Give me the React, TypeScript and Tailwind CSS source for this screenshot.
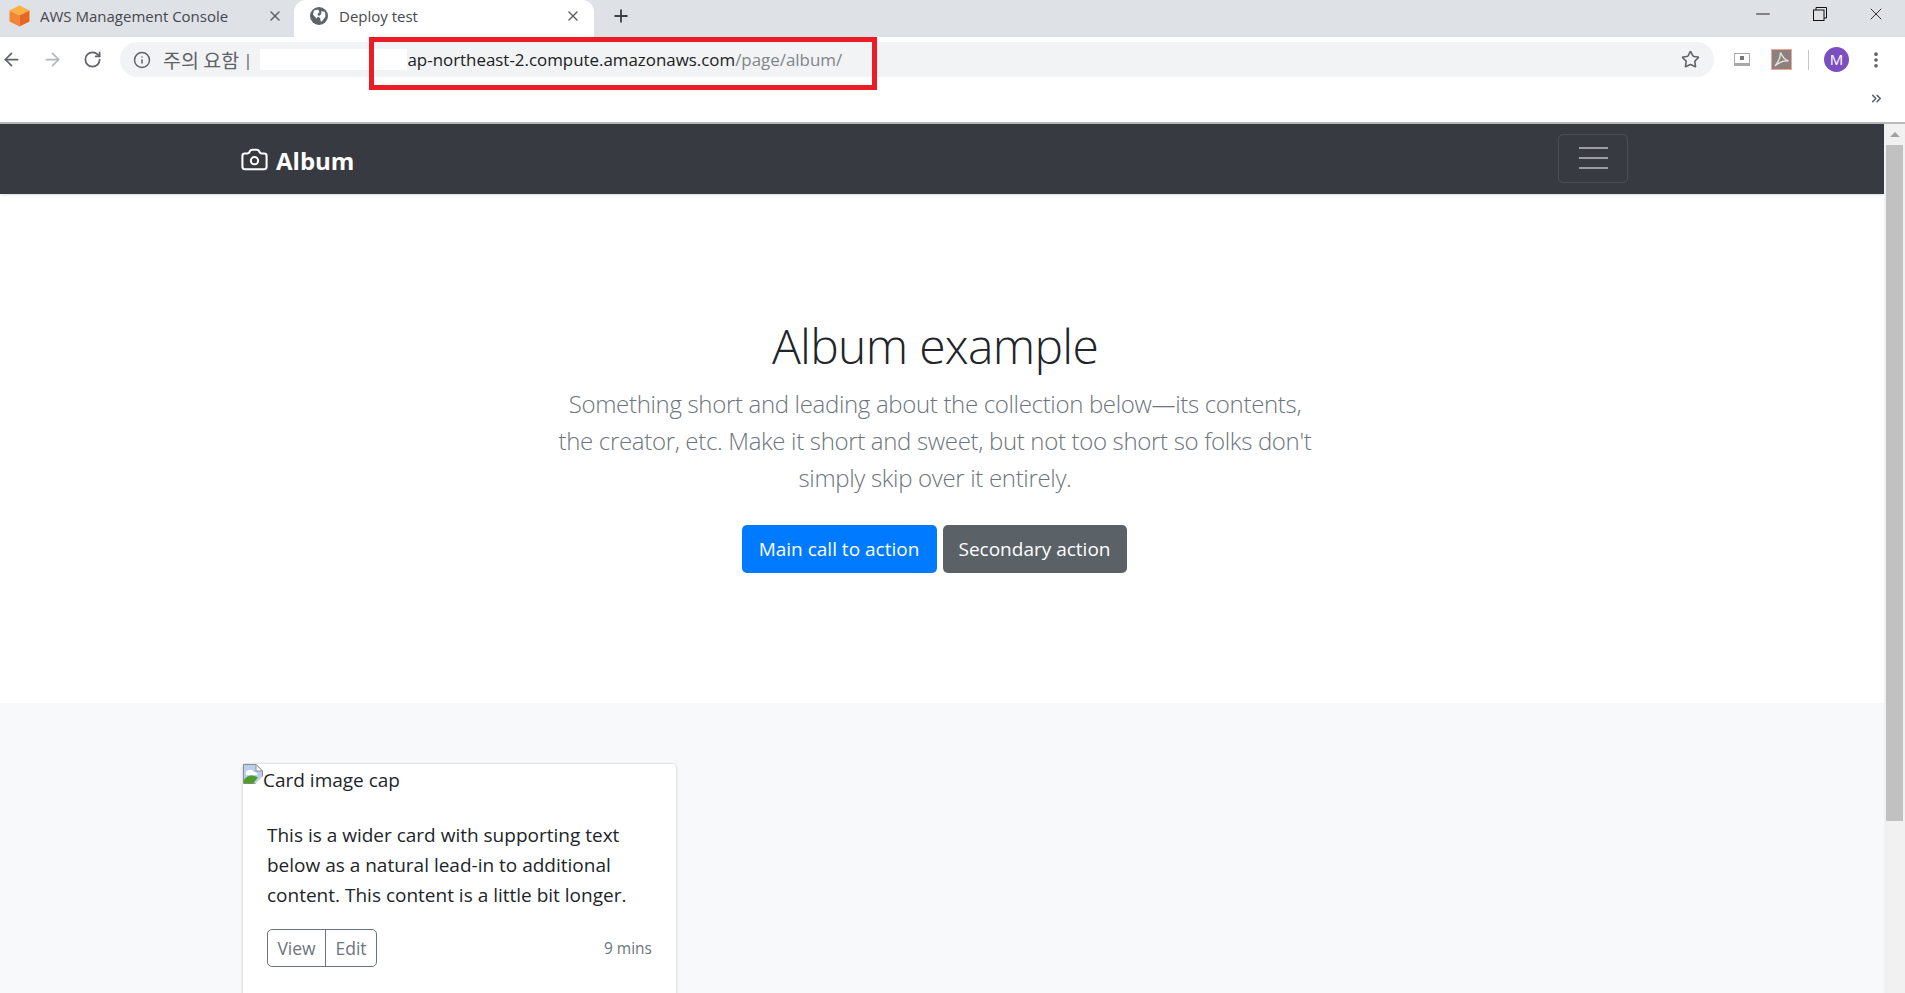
import { ArrowLeft, ArrowRight, RotateCw, Info, Star, X, Plus, Minus, Camera, MoreVertical, ChevronsRight } from 'lucide-react'

const sans = 'font-["Open_Sans",sans-serif]'

function AwsCube() {
  return (
    <svg width="21" height="22" viewBox="0 0 21 22" className="shrink-0">
      <path d="M10.5 0.5 20.5 5.5 10.5 10.5 0.5 5.5Z" fill="#fbb040" />
      <path d="M0.5 5.5 10.5 10.5V21.5L0.5 16.5Z" fill="#f58536" />
      <path d="M20.5 5.5 10.5 10.5V21.5L20.5 16.5Z" fill="#e9661f" />
    </svg>
  )
}

function Globe() {
  return (
    <svg width="18" height="18" viewBox="0 0 18 18" className="shrink-0">
      <circle cx="9" cy="9" r="9" fill="#5f6368" />
      <path d="M4 3.5 8 2.5 9.5 5 7.5 7 8.5 9 6.5 11.5 3 7.5ZM11.5 4 15 5 15.5 9.5 13 13 11 15 10 11 8 9.5 11 7.5Z" fill="#fff" />
    </svg>
  )
}

function Tab({ active, icon, title }: { active?: boolean; icon: React.ReactNode; title: string }) {
  return (
    <div className={`flex h-full items-center pb-[5px] ${active ? 'w-[300px] rounded-t-xl bg-white pl-[16px] pr-[13px]' : 'w-[294px] pl-[9px] pr-[11px]'}`}>
      {icon}
      <span className={`truncate text-[15px] text-[#45484d] ${active ? 'ml-[11px]' : 'ml-[10px]'}`}>{title}</span>
      <X size={16} strokeWidth={2.2} className="ml-auto text-[#5f6368]" />
    </div>
  )
}

function RestoreIcon() {
  return (
    <svg width="14" height="14" viewBox="0 0 14 14" fill="none" stroke="#111" strokeWidth="1">
      <rect x="0.5" y="3" width="10.5" height="10.5" />
      <path d="M3 3V0.5H13.5V11H11" />
    </svg>
  )
}

function PdfIcon() {
  return (
    <svg width="21" height="21" viewBox="0 0 21 21" className="shrink-0">
      <rect x="0.5" y="0.5" width="20" height="20" fill="#8b817f" stroke="#f3a39a" />
      <path d="M9.5 3.5C9.5 8 7.5 13 4 17C8 13 12 11.5 17.5 12C13 10.5 11 7 9.5 3.5Z" fill="none" stroke="#e6e0de" strokeWidth="1.4" />
    </svg>
  )
}

function BrokenImage() {
  return (
    <svg width="20" height="20" viewBox="0 0 20 20" className="shrink-0">
      <path d="M0.5 0.5H13L19.5 7V19.5H0.5Z" fill="#b9cfee" stroke="#8f8f8f" />
      <path d="M13 0.5V7H19.5Z" fill="#fff" stroke="#8f8f8f" />
      <path d="M3 8C5 5 9 5 11 8L14 9V11L3 11Z" fill="#fff" />
      <path d="M1 19.5V15.5C5 10.5 10 10.5 15 13.5L10 19.5Z" fill="#4f9e2c" />
      <path d="M20 12 12 20H20Z" fill="#fff" />
    </svg>
  )
}

function CardItem() {
  return (
    <div className="flex h-[240px] w-[435px] flex-col rounded-[5px] border border-black/10 bg-white shadow-sm">
      <div className="flex h-[20px] items-start text-[19px] leading-[33px] text-[#212529]">
        <BrokenImage />
        <span>Card image cap</span>
      </div>
      <div className="flex flex-1 flex-col px-[24px] pt-[36px]">
        <p className="text-[19px] leading-[30px] text-[#212529]">
          This is a wider card with supporting text below as a natural lead-in to additional content. This content is a little bit longer.
        </p>
        <div className="mt-[19px] flex items-center justify-between">
          <div className="flex h-[38px] rounded-[5px] border border-[#6c757d] text-[17.5px] text-[#6c757d]">
            <button className="w-[58px] border-r border-[#6c757d]">View</button>
            <button className="w-[50px]">Edit</button>
          </div>
          <span className="pt-[1px] text-[15.5px] text-[#6c757d]">9 mins</span>
        </div>
      </div>
    </div>
  )
}

export default function App() {
  return (
    <div className={`relative flex h-screen flex-col overflow-hidden bg-white ${sans}`}>
      {/* window title bar + tabs */}
      <div className="flex h-[37px] shrink-0 items-center bg-[#dee1e6]">
        <Tab icon={<AwsCube />} title="AWS Management Console" />
        <Tab active icon={<Globe />} title="Deploy test" />
        <Plus size={20} strokeWidth={2.2} className="mb-[5px] ml-[17px] text-[#3c4043]" />
        <div className="ml-auto flex items-center gap-[39px] pb-[10px] pr-[19px]">
          <Minus size={22} strokeWidth={1} className="text-[#111]" />
          <RestoreIcon />
          <X size={20} strokeWidth={1} className="text-[#111]" />
        </div>
      </div>

      {/* toolbar */}
      <div className="flex h-[48px] shrink-0 items-center pb-[3px]">
        <div className="flex items-center gap-[20px] pl-[1px]">
          <ArrowLeft size={21} strokeWidth={2} className="text-[#5f6368]" />
          <ArrowRight size={21} strokeWidth={2} className="text-[#b4b6b9]" />
          <RotateCw size={19} strokeWidth={2.2} className="text-[#5f6368]" />
        </div>
        <div className="ml-[18px] flex h-[35px] w-[1594px] items-center rounded-full bg-[#f1f3f4] pl-[13px] pr-[14px]">
          <Info size={18} strokeWidth={2} className="text-[#5f6368]" />
          <span className='ml-[12px] font-["Noto_Sans_CJK_KR","Open_Sans",sans-serif] text-[19.5px] text-[#5f6368]'>주의 요함</span>
          <span className="ml-[4px] text-[17px] text-[#5f6368]">|</span>
          <div className="ml-[8px] h-[21px] w-[147px] bg-white" />
          <span className="text-[16.9px] text-[#202124]">
            ap-northeast-2.compute.amazonaws.com<span className="text-[#80868b]">/page/album/</span>
          </span>
          <Star size={19} strokeWidth={2} className="ml-auto text-[#5f6368]" />
        </div>
        <div className="ml-[20px] flex items-center">
          <svg width="16" height="13" viewBox="0 0 16 13" className="shrink-0">
            <rect x="0.5" y="0.5" width="15" height="12" fill="#fff" stroke="#a8a8a8" />
            <rect x="0" y="10" width="16" height="3" fill="#a8a8a8" />
            <rect x="6" y="3" width="4" height="4" fill="#777" />
          </svg>
          <div className="ml-[21px]"><PdfIcon /></div>
          <div className="ml-[16px] h-[20px] w-px bg-[#c8c8c8]" />
          <div className="ml-[15px] flex h-[25px] w-[25px] items-center justify-center rounded-full bg-[#7b4fc0] text-[15px] text-white">M</div>
          <MoreVertical size={20} strokeWidth={2.4} className="ml-[17px] text-[#5f6368]" />
        </div>
      </div>

      {/* bookmarks bar */}
      <div className="flex h-[39px] shrink-0 items-start justify-end border-b-2 border-[#b8b8b8] pr-[21px] pt-[6px]">
        <ChevronsRight size={15} strokeWidth={2.4} className="text-[#5f6368]" />
      </div>

      {/* page */}
      <div className="flex min-h-0 flex-1">
        <main className="min-w-0 flex-1 pr-[14px]">
          <div className="-mr-[14px] flex h-[70px] bg-[#373a41] pr-[14px] shadow-sm">
            <div className="mx-auto flex w-[1386px] items-center justify-between">
              <div className="-ml-[2px] flex items-center gap-[7px] text-white">
                <Camera size={29} strokeWidth={1.7} />
                <span className="pt-[3px] text-[24px] font-bold">Album</span>
              </div>
              <div className="mb-[2px] flex h-[49px] w-[70px] flex-col items-center justify-center gap-[8px] rounded-[5px] border border-white/10">
                <div className="h-[2px] w-[29px] bg-white/50" />
                <div className="h-[2px] w-[29px] bg-white/50" />
                <div className="h-[2px] w-[29px] bg-white/50" />
              </div>
            </div>
          </div>

          <section className="flex h-[508px] flex-col items-center pt-[112px] text-center">
            <h1 className="text-[48px] font-light leading-[79px] tracking-[-0.7px] text-[#212529]">Album example</h1>
            <p className="text-[24px] font-light leading-[37px] tracking-[-0.33px] text-[#6c757d]">
              Something short and leading about the collection below—its contents,
              <br />
              the creator, etc. Make it short and sweet, but not too short so folks don't
              <br />
              simply skip over it entirely.
            </p>
            <div className="mt-[29px] flex -translate-x-[1px] gap-[6px] text-[19px] text-white">
              <button className="flex h-[48px] w-[195px] items-center justify-center rounded-[5px] bg-[#007bff]">Main call to action</button>
              <button className="flex h-[48px] w-[184px] items-center justify-center rounded-[5px] bg-[#5a6268]">Secondary action</button>
            </div>
          </section>
        </main>

        {/* scrollbar */}
        <div className="flex w-[21px] shrink-0 flex-col items-center bg-[#f1f1f1]">
          <div className="flex h-[21px] items-center">
            <div className="h-0 w-0 border-x-[5px] border-b-[5px] border-x-transparent border-b-[#a3a3a3]" />
          </div>
          <div className="h-[676px] w-[17px] bg-[#c1c1c1]" />
        </div>
      </div>

      {/* album strip, below the hero */}
      <div className="absolute bottom-0 left-0 right-[21px] h-[290px] bg-[#f8f9fa] pr-[14px] pt-[60px]">
        <div className="mx-auto w-[1386px]">
          <CardItem />
        </div>
      </div>

      {/* red annotation drawn over the screenshot */}
      <div className="absolute left-[369px] top-[37px] h-[53px] w-[508px] border-[5px] border-[#ed1c24]" />
    </div>
  )
}
